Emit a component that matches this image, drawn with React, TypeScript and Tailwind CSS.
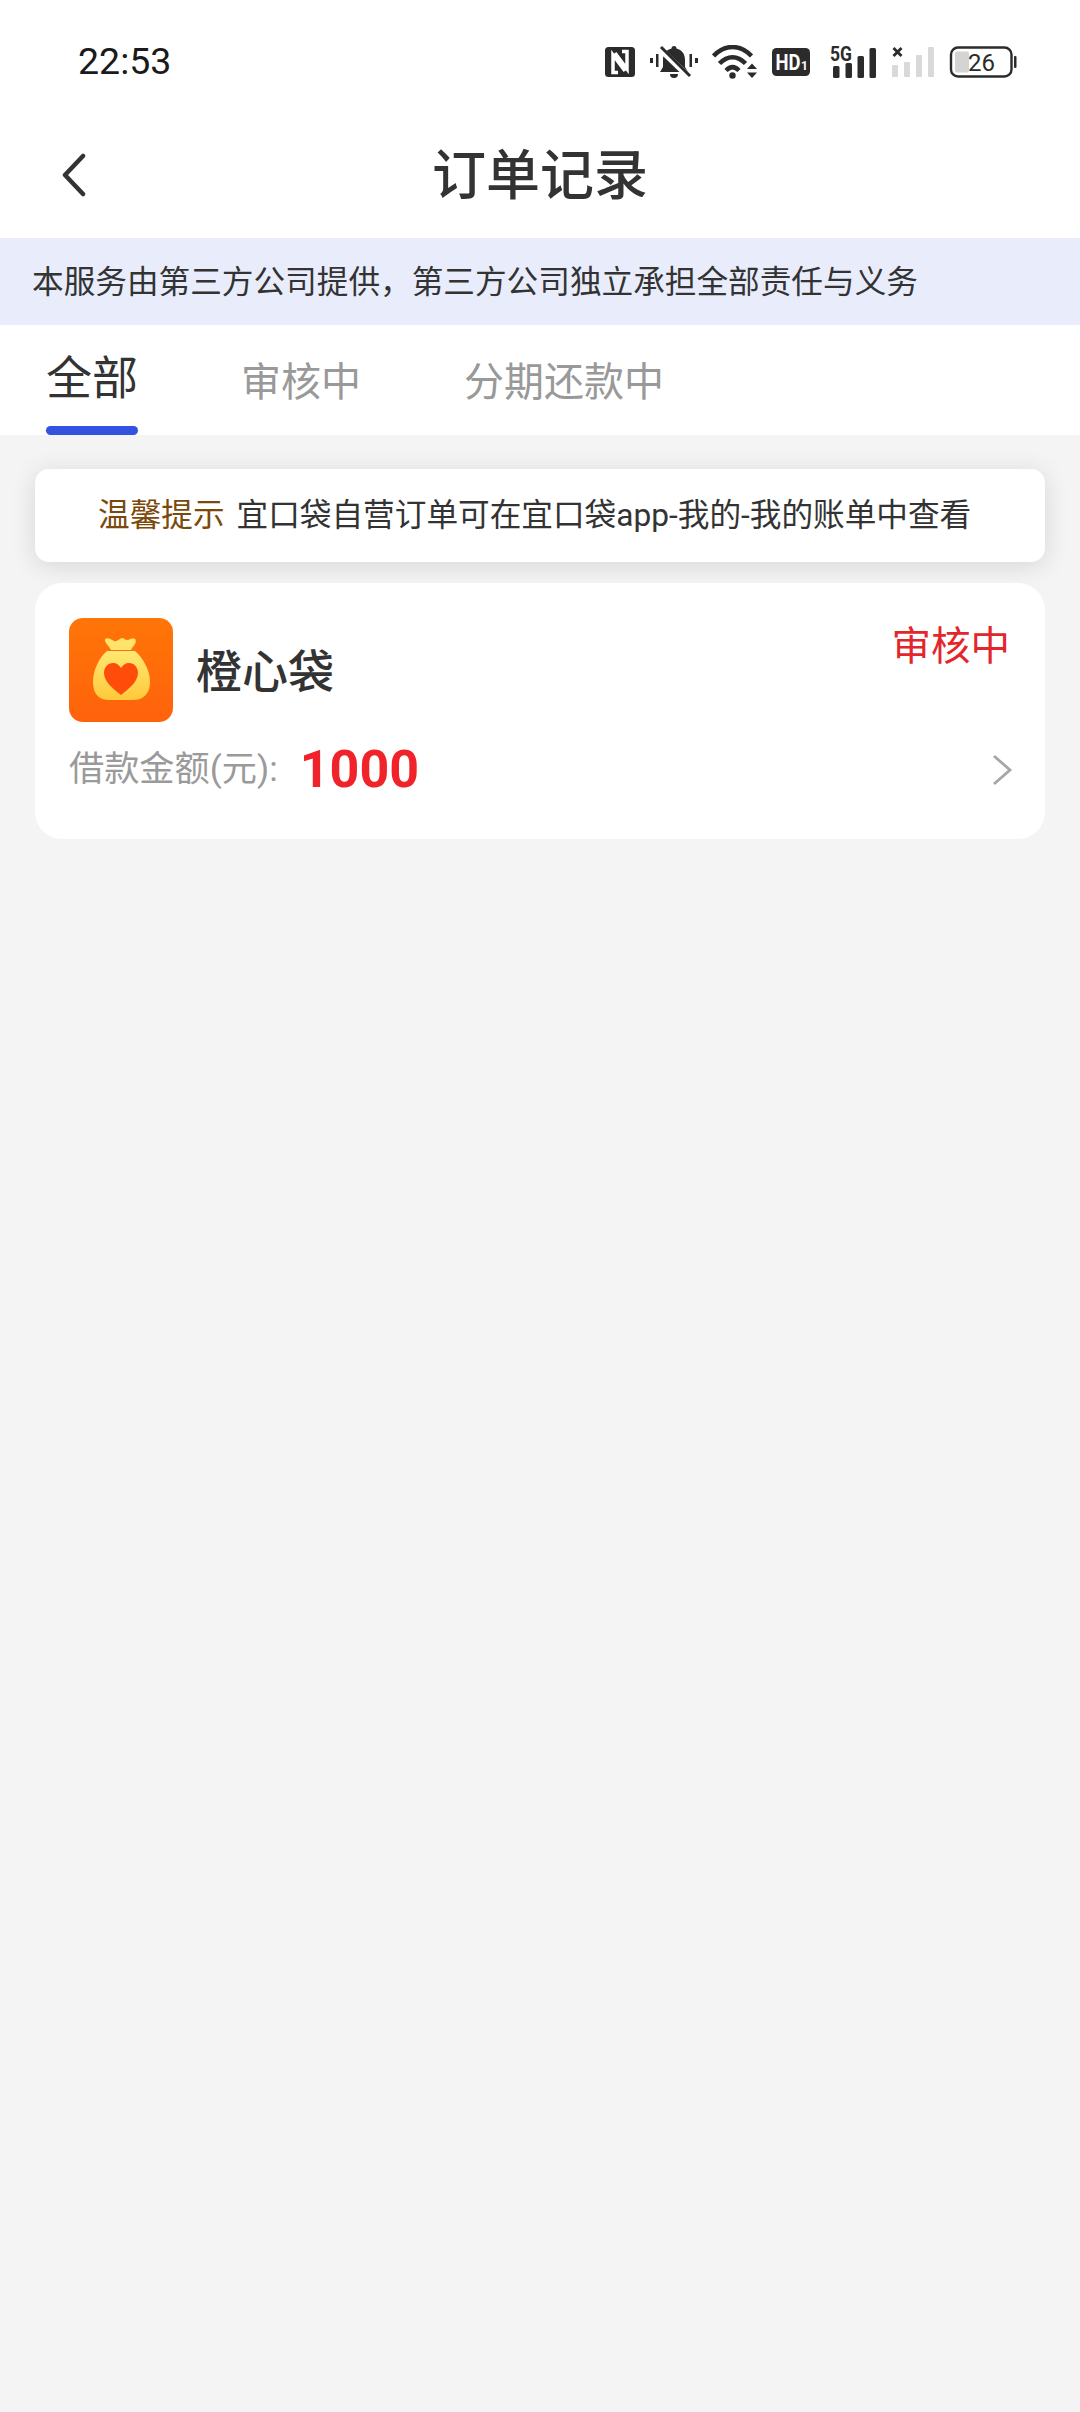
import React from "react";

const font = { fontFamily: 'Roboto, "Noto Sans CJK SC", sans-serif' };

function StatusIcons() {
  return (
    <div className="flex items-center text-[#2b2b2b]">
      <svg width="30" height="30" viewBox="0 0 30 30" className="mr-[15px]">
        <rect width="30" height="30" rx="3.500" fill="#2b2b2b" />
        <path d="M13 25.500H8V8l12 16" stroke="#fff" strokeWidth="3.500" fill="none" />
        <path d="M17 4.500h5V22L10 6" stroke="#fff" strokeWidth="3.500" fill="none" />
      </svg>
      <svg width="48" height="34" viewBox="0 0 48 34" className="mr-[14px]">
        <path d="M24 1a2.500 2.500 0 0 1 2.500 2.500C32 5 35 9 35 15v7l3 5H10l3-5v-7c0-6 3-10 8.500-11.500A2.500 2.500 0 0 1 24 1z" fill="#2b2b2b" />
        <path d="M20 29h8a4 4 0 0 1-8 0z" fill="#2b2b2b" />
        <path d="M8 2l31 30" stroke="#fff" strokeWidth="6" />
        <path d="M11 2l29 29" stroke="#2b2b2b" strokeWidth="3" />
        <path d="M0 13h3v5H0zM6 9h2.500v13H6zM39.500 9H42v13h-2.500zM45 13h3v5h-3z" fill="#2b2b2b" />
      </svg>
      <svg width="46" height="34" viewBox="0 0 46 34" className="mr-[14px]" fill="none">
        <path d="M1.500 11C13 -1 28 -1 39.500 11" stroke="#2b2b2b" strokeWidth="4.500" />
        <path d="M7.500 18.500c8-8.500 18-8.500 26 0" stroke="#2b2b2b" strokeWidth="4.500" />
        <path d="M14 25.500c4.500-4.500 8.500-4.500 13 0" stroke="#2b2b2b" strokeWidth="4.500" />
        <circle cx="20.500" cy="30.500" r="3.200" fill="#2b2b2b" />
        <path d="M35 24l5-5.500 5 5.500zM35 27.500l5 5.500 5-5.500z" fill="#2b2b2b" />
      </svg>
      <svg width="38" height="28" viewBox="0 0 38 28" className="mr-[20px] overflow-visible">
        <rect width="38" height="28" rx="4.500" fill="#2b2b2b" />
        <text x="3.500" y="21.500" fontSize="22" fontWeight="700" fill="#fff" fontFamily="Roboto" textLength="25" lengthAdjust="spacingAndGlyphs">HD</text>
        <text x="29" y="22" fontSize="12" fontWeight="700" fill="#fff" fontFamily="Roboto">1</text>
      </svg>
      <svg width="46" height="34" viewBox="0 0 46 34" className="mr-[15px] overflow-visible">
        <text x="0" y="16" fontSize="21" fontWeight="700" fill="#2b2b2b" fontFamily="Roboto" textLength="22" lengthAdjust="spacingAndGlyphs">5G</text>
        <rect x="3" y="21" width="6.500" height="12" rx="1.500" fill="#2b2b2b" />
        <rect x="15.500" y="18" width="6.500" height="15" rx="1.500" fill="#2b2b2b" />
        <rect x="27.500" y="11" width="6.500" height="22" rx="1.500" fill="#2b2b2b" />
        <rect x="39.500" y="3" width="6.500" height="30" rx="1.500" fill="#2b2b2b" />
      </svg>
      <svg width="44" height="32" viewBox="0 0 44 32" className="mr-[15px]">
        <path d="M2.500 2l8 8M10.500 2l-8 8" stroke="#2b2b2b" strokeWidth="2.800" />
        <rect x="1" y="19" width="6" height="12" rx="1" fill="#d9d9d9" />
        <rect x="13" y="16" width="6" height="15" rx="1" fill="#d9d9d9" />
        <rect x="25" y="9" width="6" height="22" rx="1" fill="#d9d9d9" />
        <rect x="37" y="1" width="6" height="30" rx="1" fill="#d9d9d9" />
      </svg>
      <svg width="67" height="32" viewBox="0 0 67 32" className="overflow-visible">
        <rect x="1" y="1.500" width="60.500" height="29" rx="7" fill="none" stroke="#2b2b2b" strokeWidth="2.400" />
        <rect x="5" y="5.500" width="14" height="21" rx="2" fill="#d4d4d4" />
        <text x="18" y="25" fontSize="24" fill="#2b2b2b" fontFamily="Roboto">26</text>
        <rect x="64" y="10" width="2.500" height="12" rx="1" fill="#2b2b2b" />
      </svg>
    </div>
  );
}

function AppIcon() {
  return (
    <svg width="104" height="104" viewBox="0 0 104 104" className="rounded-[14px] shrink-0">
      <defs>
        <linearGradient id="bg" x1="0" y1="0" x2="0" y2="1">
          <stop offset="0" stopColor="#ff7607" />
          <stop offset="1" stopColor="#ff620c" />
        </linearGradient>
        <linearGradient id="bag" x1="0" y1="0" x2="0" y2="1">
          <stop offset="0" stopColor="#ffe873" />
          <stop offset="1" stopColor="#ffc93a" />
        </linearGradient>
      </defs>
      <rect width="104" height="104" fill="url(#bg)" />
      <path d="M36 21c3-2 6 0 9 2 3 1 5-2 8-3 2 0 3 2 5 2 3 0 6-3 8-1 2 2 0 6-3 9l-1 2H42c-2-4-7-8-6-11z" fill="#ffe36a" />
      <path d="M38 33H66C74 40 81 52 81 64 81 76 74 82 64 82H40C30 82 24 76 24 64 24 52 30 40 38 33z" fill="url(#bag)" />
      <path d="M52 77C43 70 35 63 35 55c0-6 4-10 9-10 4 0 6 2 8 5 2-3 4-5 8-5 5 0 9 4 9 10 0 8-8 15-17 22z" fill="#ff4c0b" />
    </svg>
  );
}

export default function App() {
  return (
    <div className="w-[1080px] min-h-[2412px] bg-[#f4f4f5] flex flex-col" style={font}>
      <div className="bg-white h-[124px] pl-[78px] pr-[63px] flex items-center justify-between">
        <span className="text-[37.5px] leading-none text-[#1a1a1a]">22:53</span>
        <StatusIcons />
      </div>

      <div className="bg-white h-[114px] relative flex items-center justify-center pb-[9px]">
        <svg width="30" height="44" viewBox="0 0 30 44" fill="none" className="absolute left-[59px] top-[29px]">
          <path d="M24 3L6 22l18 19" stroke="#333333" strokeWidth="4.500" strokeLinecap="round" strokeLinejoin="round" />
        </svg>
        <h1 className="text-[54px] leading-none font-medium text-[#333333]">订单记录</h1>
      </div>

      <div className="bg-[#e9edfb] h-[87px] pl-[32px] pt-[2px] flex items-center text-[31.65px] leading-none text-[#333333]">
        本服务由第三方公司提供，第三方公司独立承担全部责任与义务
      </div>

      <div className="bg-white h-[110px] flex items-start pl-[46px] text-[#999999]">
        <div className="relative h-[110px] w-[92px] flex justify-center pt-[30px]">
          <span className="text-[46px] leading-none text-[#333333]">全部</span>
          <div className="absolute left-0 bottom-0 w-[92px] h-[9px] rounded-full bg-[#3352e0]" />
        </div>
        <span className="ml-[103px] mt-[38px] text-[40px] leading-none">审核中</span>
        <span className="ml-[103px] mt-[38px] text-[40px] leading-none">分期还款中</span>
      </div>

      <div className="px-[35px] pt-[34px] flex flex-col gap-[21px]">
        <div className="bg-white h-[93px] rounded-[14px] shadow-[0_4px_26px_rgba(0,0,0,0.12)] flex items-center pl-[63px] text-[31.65px] leading-none">
          <span className="text-[#7a4a0c]">温馨提示</span>
          <span className="ml-[12px] text-[#333333]">宜口袋自营订单可在宜口袋app-我的-我的账单中查看</span>
        </div>

        <div className="relative bg-white h-[256px] rounded-[27px] px-[34px] pt-[35px]">
          <div className="flex items-start justify-between">
            <div className="flex items-center">
              <AppIcon />
              <span className="ml-[23px] mt-[3px] text-[46px] leading-none font-medium text-[#333333]">橙心袋</span>
            </div>
            <span className="mt-[9px] mr-[1px] text-[39.5px] leading-none text-[#e3262c]">审核中</span>
          </div>
          <div className="flex items-center justify-between mt-[22px]">
            <div className="flex items-center">
              <span className="text-[35.2px] leading-none text-[#9a9a9a]">借款金额(元):</span>
              <span className="ml-[22px] text-[52px] leading-none font-bold text-[#ef2329]">1000</span>
            </div>
            <svg width="22" height="32" viewBox="0 0 22 32" fill="none" className="mr-[-2px]">
              <path d="M3 2l16 14L3 30" stroke="#a6a6a6" strokeWidth="2.800" />
            </svg>
          </div>
        </div>
      </div>
    </div>
  );
}
